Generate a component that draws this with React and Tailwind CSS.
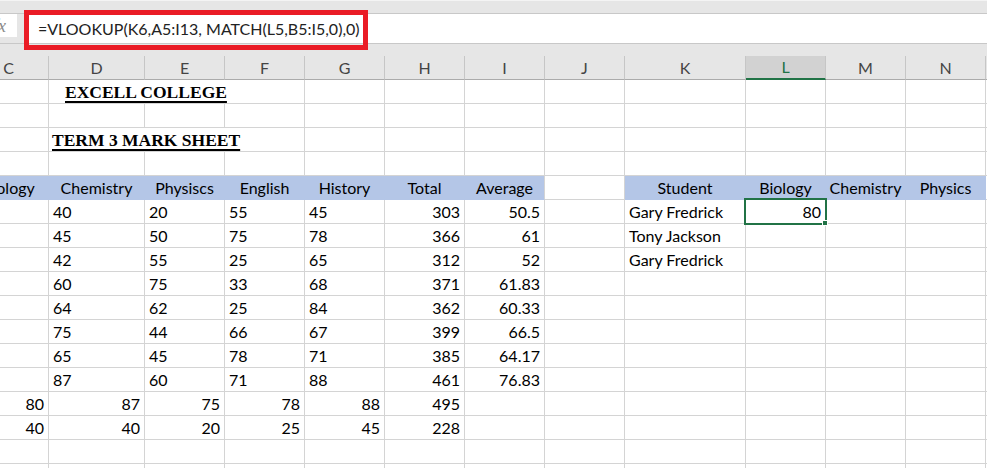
import React from 'react';

const COLS = ['C', 'D', 'E', 'F', 'G', 'H', 'I', 'J', 'K', 'L', 'M', 'N', 'O'];

// one entry per row, cells in column order C..O
// { t: text, a: 'l' | 'r' | 'c', blue, span }
const L = (t) => ({ t, a: 'l' });
const R = (t) => ({ t, a: 'r' });
const C = (t) => ({ t, a: 'c', blue: true });
const E = { t: '' };
const B = { t: '', blue: true };

const blank = () => COLS.map(() => E);

const rows = [
  [E, { t: 'EXCELL COLLEGE', title: true, pad: 'pl-[16px]', span: 3 }, E, E, E, E, E, E, E, E, E],
  blank(),
  [E, { t: 'TERM 3 MARK SHEET', title: true, pad: 'pl-[3px]', span: 3 }, E, E, E, E, E, E, E, E, E],
  blank(),
  [
    C('Biology'), C('Chemistry'), C('Physiscs'), C('English'), C('History'), C('Total'), { ...C('Average'), last: true },
    E, C('Student'), C('Biology'), C('Chemistry'), C('Physics'), E,
  ],
  [E, L('40'), L('20'), L('55'), L('45'), R('303'), R('50.5'), E, L('Gary Fredrick'), R('80'), E, E, E],
  [E, L('45'), L('50'), L('75'), L('78'), R('366'), R('61'), E, L('Tony Jackson'), E, E, E, E],
  [E, L('42'), L('55'), L('25'), L('65'), R('312'), R('52'), E, L('Gary Fredrick'), E, E, E, E],
  [E, L('60'), L('75'), L('33'), L('68'), R('371'), R('61.83'), E, E, E, E, E, E],
  [E, L('64'), L('62'), L('25'), L('84'), R('362'), R('60.33'), E, E, E, E, E, E],
  [E, L('75'), L('44'), L('66'), L('67'), R('399'), R('66.5'), E, E, E, E, E, E],
  [E, L('65'), L('45'), L('78'), L('71'), R('385'), R('64.17'), E, E, E, E, E, E],
  [E, L('87'), L('60'), L('71'), L('88'), R('461'), R('76.83'), E, E, E, E, E, E],
  [R('80'), R('87'), R('75'), R('78'), R('88'), R('495'), E, E, E, E, E, E, E],
  [R('40'), R('40'), R('20'), R('25'), R('45'), R('228'), E, E, E, E, E, E, E],
  blank(),
  blank(),
];

const gridCols =
  'grid grid-cols-[80px_96px_80px_80px_80px_80px_80px_80px_121px_80px_80px_80px_80px]';

function Cell({ cell }) {
  const align =
    cell.a === 'r' ? 'justify-end' : cell.a === 'c' ? 'justify-center' : 'justify-start';
  const colour = cell.blue
    ? `bg-[#b4c6e7] border-b-[#b4c6e7] ${cell.last ? 'border-r-[#d4d4d4]' : 'border-r-[#b4c6e7]'}`
    : 'border-[#d4d4d4]';
  const span = cell.span === 3 ? 'col-span-3' : '';

  if (cell.title) {
    return (
      <div className={`${span} h-[24px] border-r border-b border-[#d4d4d4] flex items-end pb-[1px] ${cell.pad}`}>
        <span className="font-['Liberation_Serif',serif] font-bold text-[17.5px] leading-[20px] text-black underline decoration-[2px] underline-offset-[3px] whitespace-nowrap">
          {cell.t}
        </span>
      </div>
    );
  }

  return (
    <div
      className={`${span} h-[24px] border-r border-b ${colour} flex items-end ${align} px-[4px] pb-[2px] text-[16px] leading-[19px] text-black whitespace-nowrap`}
    >
      {cell.t}
    </div>
  );
}

export default function App() {
  return (
    <div className="relative w-[987px] h-[468px] overflow-hidden bg-white font-['Lato',sans-serif]">
      {/* ribbon edge */}
      <div className="h-[14px] bg-[#e6e6e6] border-t border-t-[#f4f4f4] border-b border-b-[#c8c8c8]" />

      {/* formula bar */}
      <div className="h-[30px] flex border-b border-[#c8c8c8]">
        <div className="w-[24px] bg-[#e6e6e6] flex flex-col">
          <div className="w-[17px] h-[23px] bg-white overflow-hidden flex items-center">
            <span className="-ml-[7px] font-['Liberation_Serif',serif] italic text-[18px] leading-none text-[#8a8a8a]">
              fx
            </span>
          </div>
        </div>
        <div className="flex-1 bg-white flex items-center pl-[14px] text-[16px] text-[#222] whitespace-nowrap">
          =VLOOKUP(K6,A5:I13, MATCH(L5,B5:I5,0),0)
        </div>
      </div>

      {/* column letters */}
      <div className="bg-[#e6e6e6] pt-[12px] overflow-hidden">
        <div className={`${gridCols} -ml-[31px]`}>
          {COLS.map((c) => (
            <div
              key={c}
              className={`h-[24px] border-r border-r-[#c6c6c6] flex items-center justify-center text-[16px] ${
                c === 'L'
                  ? 'bg-[#d2d2d2] text-[#217346] border-b-2 border-b-[#217346]'
                  : 'text-[#444] border-b border-b-[#ababab]'
              }`}
            >
              {c}
            </div>
          ))}
        </div>
      </div>

      {/* sheet */}
      <div className="overflow-hidden">
        <div className={`${gridCols} -ml-[31px]`}>
          {rows.map((row, r) =>
            row.map((cell, c) => <Cell key={`${r}-${c}`} cell={cell} />)
          )}
        </div>
      </div>

      {/* annotation round the formula */}
      <div className="absolute left-[24px] top-[10px] w-[344px] h-[40px] border-[5px] border-[#ea1c26]" />

      {/* active cell L6 */}
      <div className="absolute left-[744px] top-[198px] w-[83px] h-[27px] border-2 border-[#217346]" />
      <div className="absolute left-[822px] top-[220px] w-[6px] h-[6px] bg-[#217346] border border-white" />
    </div>
  );
}
